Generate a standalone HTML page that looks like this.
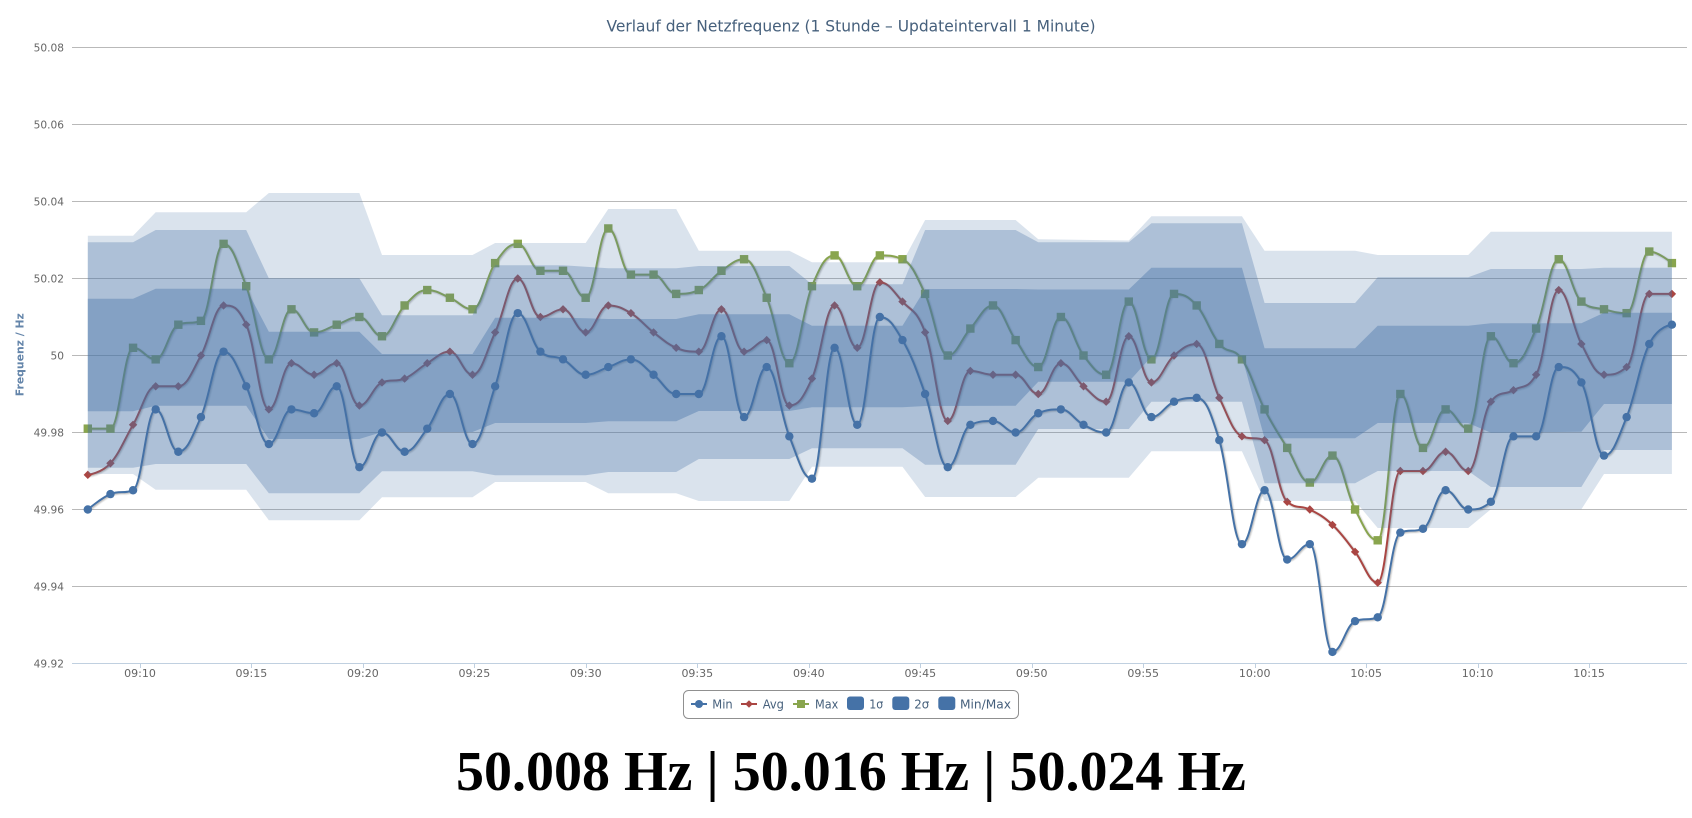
<!DOCTYPE html>
<html lang="de">
<head>
<meta charset="utf-8">
<title>Verlauf der Netzfrequenz</title>
<style>
html,body{margin:0;padding:0;background:#fff;width:1692px;height:818px;overflow:hidden}
svg{display:block;position:absolute;left:0;top:0}
.t{font-family:"DejaVu Sans","Liberation Sans",sans-serif}
.yl{font-size:10.6px;fill:#666;text-anchor:end}
.xl{font-size:11px;fill:#666;text-anchor:middle}
.lg{font-size:12px;fill:#46607c}
</style>
</head>
<body>
<svg id="c" width="1692" height="818" viewBox="0 0 1692 818" xmlns="http://www.w3.org/2000/svg">
<g id="grid" stroke="#b9b9b9" stroke-width="1">
<path d="M72 47.5H1687M72 124.5H1687M72 201.5H1687M72 278.5H1687M72 355.5H1687M72 432.5H1687M72 509.5H1687M72 586.5H1687"/>
</g>
<path d="M72 663.5H1687" stroke="#c0d0e0" stroke-width="1" fill="none"/>
<path id="ticks" d="" stroke="#c0d0e0" stroke-width="1" fill="none"/>
<g id="series"></g>
<g id="bands"></g>
<g class="t">
<text x="851" y="31.5" font-size="16" fill="#46607c" text-anchor="middle" textLength="489" lengthAdjust="spacingAndGlyphs">Verlauf der Netzfrequenz (1 Stunde – Updateintervall 1 Minute)</text>
<text class="yl" x="64" y="51.5">50.08</text>
<text class="yl" x="64" y="128.5">50.06</text>
<text class="yl" x="64" y="205.5">50.04</text>
<text class="yl" x="64" y="282.5">50.02</text>
<text class="yl" x="64" y="359.5">50</text>
<text class="yl" x="64" y="436.5">49.98</text>
<text class="yl" x="64" y="513.5">49.96</text>
<text class="yl" x="64" y="590.5">49.94</text>
<text class="yl" x="64" y="667.5">49.92</text>
<text transform="translate(23.5 354.7) rotate(-90)" font-size="11" font-weight="bold" fill="#6485aa" text-anchor="middle" textLength="83" lengthAdjust="spacingAndGlyphs">Frequenz / Hz</text>
<text class="xl" x="140" y="677">09:10</text>
<text class="xl" x="251.4" y="677">09:15</text>
<text class="xl" x="362.9" y="677">09:20</text>
<text class="xl" x="474.4" y="677">09:25</text>
<text class="xl" x="585.8" y="677">09:30</text>
<text class="xl" x="697.3" y="677">09:35</text>
<text class="xl" x="808.8" y="677">09:40</text>
<text class="xl" x="920.3" y="677">09:45</text>
<text class="xl" x="1031.7" y="677">09:50</text>
<text class="xl" x="1143.2" y="677">09:55</text>
<text class="xl" x="1254.7" y="677">10:00</text>
<text class="xl" x="1366.2" y="677">10:05</text>
<text class="xl" x="1477.6" y="677">10:10</text>
<text class="xl" x="1589.1" y="677">10:15</text>
<rect x="683.5" y="690.5" width="335" height="28" rx="5" ry="5" fill="#fff" stroke="#909090" stroke-width="1"/>
<path d="M691 704H707" stroke="#4572a7" stroke-width="2"/><circle cx="699" cy="704" r="4" fill="#4572a7"/>
<text class="lg" x="712.3" y="708.3" textLength="20.4" lengthAdjust="spacingAndGlyphs">Min</text>
<path d="M741 704H757" stroke="#aa4643" stroke-width="2"/><path d="M749 700.2L752.8 704L749 707.8L745.2 704Z" fill="#aa4643"/>
<text class="lg" x="762.7" y="708.3" textLength="21.3" lengthAdjust="spacingAndGlyphs">Avg</text>
<path d="M793 704H809" stroke="#89a54e" stroke-width="2"/><rect x="797" y="700" width="8" height="8" fill="#89a54e"/>
<text class="lg" x="815" y="708.3" textLength="23.3" lengthAdjust="spacingAndGlyphs">Max</text>
<rect x="847" y="696.5" width="17" height="13.5" rx="3" fill="#4572a7"/>
<text class="lg" x="869.3" y="708.3" textLength="14" lengthAdjust="spacingAndGlyphs">1σ</text>
<rect x="892.3" y="696.5" width="17" height="13.5" rx="3" fill="#4572a7"/>
<text class="lg" x="914.3" y="708.3" textLength="15" lengthAdjust="spacingAndGlyphs">2σ</text>
<rect x="938.3" y="696.5" width="17" height="13.5" rx="3" fill="#4572a7"/>
<text class="lg" x="960" y="708.3" textLength="51" lengthAdjust="spacingAndGlyphs">Min/Max</text>
</g>
<text x="456" y="790" font-family="'Liberation Serif',serif" font-size="56" font-weight="bold" fill="#000">50.008 Hz | 50.016 Hz | 50.024 Hz</text>
</svg>
<script>
(function(){
var NS='http://www.w3.org/2000/svg';
var X0=87.8,DX=22.63;
function px(i){return X0+DX*i}
function py(n){return 355.5-n*3.85}
function el(parent,name,attrs){var e=document.createElementNS(NS,name);for(var k in attrs)e.setAttribute(k,attrs[k]);parent.appendChild(e);return e}
var MAX=[-19,-19,2,-1,8,9,29,18,-1,12,6,8,10,5,13,17,15,12,24,29,22,22,15,33,21,21,16,17,22,25,15,-2,18,26,18,26,25,16,0,7,13,4,-3,10,0,-5,14,-1,16,13,3,-1,-14,-24,-33,-26,-40,-48,-10,-24,-14,-19,5,-2,7,25,14,12,11,27,24];
var AVG=[-31,-28,-18,-8,-8,0,13,8,-14,-2,-5,-2,-13,-7,-6,-2,1,-5,6,20,10,12,6,13,11,6,2,1,12,1,4,-13,-6,13,2,19,14,6,-17,-4,-5,-5,-10,-2,-8,-12,5,-7,0,3,-11,-21,-22,-38,-40,-44,-51,-59,-30,-30,-25,-30,-12,-9,-5,17,3,-5,-3,16,16];
var MIN=[-40,-36,-35,-14,-25,-16,1,-8,-23,-14,-15,-8,-29,-20,-25,-19,-10,-23,-8,11,1,-1,-5,-3,-1,-5,-10,-10,5,-16,-3,-21,-32,2,-18,10,4,-10,-29,-18,-17,-20,-15,-14,-18,-20,-7,-16,-12,-11,-22,-49,-35,-53,-49,-77,-69,-68,-46,-45,-35,-40,-38,-21,-21,-3,-7,-26,-16,3,8];
function spline(a){
  var P=[],i;
  for(i=0;i<a.length;i++)P.push({x:px(i),y:py(a[i])});
  var s=1.5,d=2.5;
  for(i=1;i<P.length-1;i++){
    var p=P[i],l=P[i-1],n=P[i+1];
    var lx=(s*p.x+l.x)/d,ly=(s*p.y+l.y)/d,rx=(s*p.x+n.x)/d,ry=(s*p.y+n.y)/d;
    var c=((ry-ly)*(rx-p.x))/(rx-lx)+p.y-ry;
    ly+=c;ry+=c;
    if(ly>l.y&&ly>p.y){ly=Math.max(l.y,p.y);ry=2*p.y-ly}
    else if(ly<l.y&&ly<p.y){ly=Math.min(l.y,p.y);ry=2*p.y-ly}
    if(ry>n.y&&ry>p.y){ry=Math.max(n.y,p.y);ly=2*p.y-ry}
    else if(ry<n.y&&ry<p.y){ry=Math.min(n.y,p.y);ly=2*p.y-ry}
    p.lx=lx;p.ly=ly;p.rx=rx;p.ry=ry;
  }
  var D='M'+P[0].x.toFixed(2)+' '+P[0].y.toFixed(2);
  for(i=1;i<P.length;i++){
    var a0=P[i-1],b=P[i];
    D+='C'+(a0.rx===undefined?a0.x:a0.rx).toFixed(2)+' '+(a0.ry===undefined?a0.y:a0.ry).toFixed(2)+' '+
       (b.lx===undefined?b.x:b.lx).toFixed(2)+' '+(b.ly===undefined?b.y:b.ly).toFixed(2)+' '+b.x.toFixed(2)+' '+b.y.toFixed(2);
  }
  return {d:D,P:P};
}
var S=document.getElementById('series');
function line(a,color,kind){
  var r=spline(a),g=el(S,'g',{});
  [[4.5,.04],[3,.08],[1.5,.12]].forEach(function(w){
    el(g,'path',{d:r.d,fill:'none',stroke:'#000','stroke-width':w[0],'stroke-opacity':w[1],transform:'translate(1 1)','stroke-linecap':'round','stroke-linejoin':'round'});
  });
  el(g,'path',{d:r.d,fill:'none',stroke:color,'stroke-width':2,'stroke-linecap':'round','stroke-linejoin':'round'});
  r.P.forEach(function(p){
    if(kind==='c')el(g,'circle',{cx:p.x,cy:p.y,r:4.2,fill:color});
    else if(kind==='s')el(g,'rect',{x:p.x-4.2,y:p.y-4.2,width:8.4,height:8.4,fill:color});
    else el(g,'path',{d:'M'+p.x+' '+(p.y-4.2)+'L'+(p.x+4.2)+' '+p.y+'L'+p.x+' '+(p.y+4.2)+'L'+(p.x-4.2)+' '+p.y+'Z',fill:color});
  });
}
line(MIN,'#4572a7','c');
line(AVG,'#aa4643','d');
line(MAX,'#89a54e','s');
var B=document.getElementById('bands');
function band(up,lo,alpha){
  var d='',i;
  for(i=0;i<up.length;i++)d+=(i?'L':'M')+px(up[i][0]).toFixed(2)+' '+up[i][1];
  for(i=lo.length-1;i>=0;i--)d+='L'+px(lo[i][0]).toFixed(2)+' '+lo[i][1];
  el(B,'path',{d:d+'Z',fill:'#4572a7','fill-opacity':alpha});
}
band(
 [[0,235.7],[2,235.7],[3,212.3],[7,212.3],[8,193],[12,193],[13,255],[17,255],[18,243],[22,243],[23,209],[26,209],[27,250.7],[31,250.7],[32,262.3],[36,262.3],[37,220],[41,220],[42,239.3],[46,240.5],[47,216.3],[51,216.3],[52,250.7],[56,250.7],[57,255],[61,255],[62,231.7],[70,231.7]],
 [[0,474],[2,474],[3,489.7],[7,489.7],[8,520.3],[12,520.3],[13,497.3],[17,497.3],[18,482],[22,482],[23,493.3],[26,493.3],[27,501],[31,501],[32,466.7],[36,466.7],[37,497],[41,497],[42,477.7],[46,477.7],[47,451.3],[51,451.3],[52,501],[56,501],[57,528],[61,528],[62,509.3],[66,509.3],[67,474],[70,474]],
 0.2);
band(
 [[0,242.3],[2,242.3],[3,230],[7,230],[8,278.3],[12,278.3],[13,315.3],[17,315.3],[18,265.3],[21,265.3],[22,266.7],[23,268.3],[26,268.3],[27,266],[31,266],[32,284.3],[36,284.3],[37,230],[41,230],[42,242.3],[46,242.3],[47,223.3],[51,223.3],[52,303],[56,303],[57,277.3],[61,277.3],[62,269],[66,269],[67,267.7],[70,267.7]],
 [[0,467.7],[2,467.7],[3,464],[7,464],[8,493.3],[12,493.3],[13,471.3],[17,471.3],[18,475.3],[22,475.3],[23,472],[26,472],[27,459],[31,459],[32,448.3],[36,448.3],[37,464.7],[41,464.7],[42,429],[46,429],[47,401.7],[51,401.7],[52,483.3],[56,483.3],[57,471],[61,471],[62,487],[66,487],[67,450],[70,450]],
 0.3);
band(
 [[0,298.7],[2,298.7],[3,288.7],[7,288.7],[8,331.7],[12,331.7],[13,354],[17,354],[18,317.7],[21,317.7],[22,318.3],[23,319],[26,319],[27,314.3],[31,314.3],[32,325.7],[36,325.7],[37,289],[41,289],[42,289.5],[46,289.5],[47,267.7],[51,267.7],[52,348.3],[56,348.3],[57,325.7],[61,325.7],[62,323.3],[66,323.3],[67,312.7],[70,312.7]],
 [[0,411.3],[2,411.3],[3,405.7],[7,405.7],[8,439],[12,439],[13,432],[17,432],[18,423],[22,423],[23,421.3],[26,421.3],[27,411],[31,411],[32,407.3],[36,407.3],[37,406],[41,405.7],[42,381.7],[46,381.7],[47,356.7],[51,356.7],[52,438.3],[56,438.3],[57,423],[61,423],[62,432.7],[66,431.7],[67,404],[70,404]],
 0.4);
var t='';
for(var k=0;k<14;k++){var x=Math.round(139.9+k*111.47)+.5;t+='M'+x+' 663V668'}
document.getElementById('ticks').setAttribute('d',t);
})();
</script>
</body>
</html>
